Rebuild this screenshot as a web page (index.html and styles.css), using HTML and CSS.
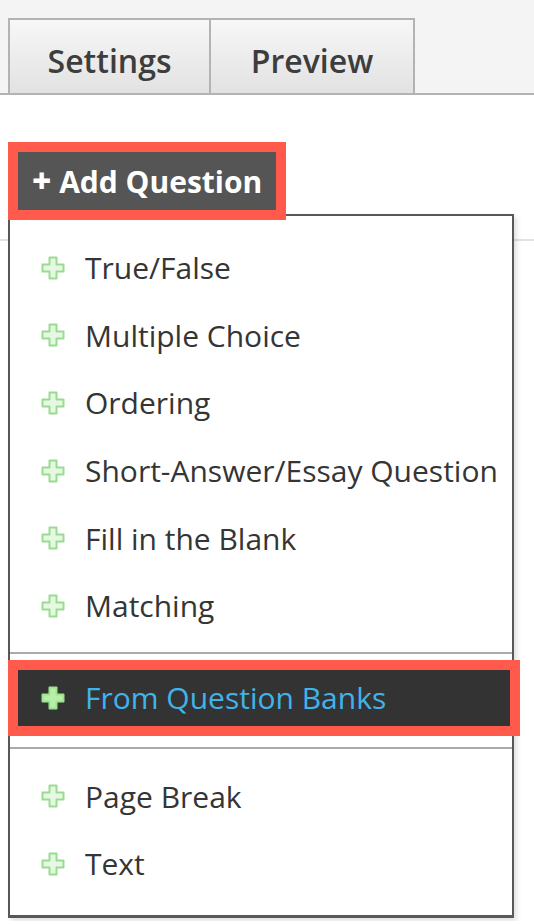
FILE: index.html
```html
<!DOCTYPE html>
<html lang="en">
<head>
<meta charset="utf-8">
<title>Add Question</title>
<link rel="stylesheet" href="styles.css">
</head>
<body>
<div class="tabbar">
  <div class="tab tab-first">Settings</div>
  <div class="tab">Preview</div>
</div>
<div class="workspace">
  <div class="toolbar">
    <div class="add-wrap">
      <button class="add-btn"><span class="plus">+</span> Add Question</button>
      <div class="menu">
        <ul class="section section-types">
          <li class="item"><svg class="ico" viewBox="0 0 24 24"><path class="cross" d="M8.5 1.5h7v7h7v7h-7v7h-7v-7h-7v-7h7z"/></svg><span>True/False</span></li>
          <li class="item"><svg class="ico" viewBox="0 0 24 24"><path class="cross" d="M8.5 1.5h7v7h7v7h-7v7h-7v-7h-7v-7h7z"/></svg><span>Multiple Choice</span></li>
          <li class="item"><svg class="ico" viewBox="0 0 24 24"><path class="cross" d="M8.5 1.5h7v7h7v7h-7v7h-7v-7h-7v-7h7z"/></svg><span>Ordering</span></li>
          <li class="item"><svg class="ico" viewBox="0 0 24 24"><path class="cross" d="M8.5 1.5h7v7h7v7h-7v7h-7v-7h-7v-7h7z"/></svg><span>Short-Answer/Essay Question</span></li>
          <li class="item"><svg class="ico" viewBox="0 0 24 24"><path class="cross" d="M8.5 1.5h7v7h7v7h-7v7h-7v-7h-7v-7h7z"/></svg><span>Fill in the Blank</span></li>
          <li class="item"><svg class="ico" viewBox="0 0 24 24"><path class="cross" d="M8.5 1.5h7v7h7v7h-7v7h-7v-7h-7v-7h7z"/></svg><span>Matching</span></li>
        </ul>
        <ul class="section section-banks">
          <li class="item item-active"><svg class="ico" viewBox="0 0 24 24"><path class="cross cross-solid" d="M8.5 1.5h7v7h7v7h-7v7h-7v-7h-7v-7h7z"/></svg><span>From Question Banks</span><div class="highlight"></div></li>
        </ul>
        <ul class="section section-other">
          <li class="item"><svg class="ico" viewBox="0 0 24 24"><path class="cross" d="M8.5 1.5h7v7h7v7h-7v7h-7v-7h-7v-7h7z"/></svg><span>Page Break</span></li>
          <li class="item"><svg class="ico" viewBox="0 0 24 24"><path class="cross" d="M8.5 1.5h7v7h7v7h-7v7h-7v-7h-7v-7h7z"/></svg><span>Text</span></li>
        </ul>
      </div>
    </div>
  </div>
  <div class="panel"></div>
</div>
</body>
</html>
```

FILE: styles.css
```css
html, body {
  margin: 0;
  padding: 0;
  background: #ffffff;
  font-family: "Open Sans", "Liberation Sans", sans-serif;
  color: #3a3a3a;
}

.tabbar {
  display: flex;
  align-items: flex-end;
  background: #f4f4f4;
  padding: 18px 0 0 8px;
  height: 75px;
  border-bottom: 2px solid #b3b3b3;
}

.tab {
  box-sizing: border-box;
  height: 75px;
  width: 204px;
  padding-top: 21px;
  text-align: center;
  font-size: 32px;
  line-height: 40px;
  font-weight: 600;
  color: #3d3d3d;
  background: linear-gradient(#f7f7f7, #e2e2e2);
  border: 2px solid #b3b3b3;
  border-bottom: 0;
  border-left: 0;
}

.tab-first {
  width: 203px;
  border-left: 2px solid #b3b3b3;
}

.toolbar {
  padding: 57px 0 0 18px;
}

.add-wrap {
  position: relative;
  width: 258px;
}

.add-btn {
  position: relative;
  z-index: 2;
  display: block;
  box-sizing: border-box;
  width: 258px;
  height: 58px;
  margin: 0;
  padding: 0 0 2px 14px;
  border: 0;
  background: #555555;
  color: #ffffff;
  font-family: "Open Sans", "Liberation Sans", sans-serif;
  font-size: 30px;
  font-weight: 700;
  text-align: left;
  white-space: nowrap;
  outline: 10px solid #ff5a4b;
}

.plus {
  font-size: 33px;
  font-weight: 800;
}

.menu {
  position: absolute;
  z-index: 1;
  top: 62px;
  left: -10px;
  box-sizing: border-box;
  width: 506px;
  background: #ffffff;
  border: 2px solid #585858;
  border-bottom-width: 3px;
  box-shadow: 3px 3px 5px rgba(0, 0, 0, 0.12);
}

.section {
  list-style: none;
  margin: 0;
  padding: 0;
}

.section-types {
  padding: 18px 0 12px;
  border-bottom: 2px solid #aaaaaa;
}

.section-banks {
  padding: 6px 0 11px;
  border-bottom: 2px solid #aaaaaa;
}

.section-other {
  padding: 14px 0 17px;
}

.item {
  display: flex;
  align-items: center;
  height: 67.6px;
  padding-left: 31px;
  font-size: 30px;
  color: #353535;
  white-space: nowrap;
}

.section-other .item {
  height: 67.5px;
}

.ico {
  flex: none;
  width: 24px;
  height: 24px;
  margin-right: 20px;
}

.cross {
  fill: #e6f8e2;
  stroke: #97dc8f;
  stroke-width: 2;
  stroke-linejoin: round;
}

.cross-solid {
  fill: #b6f0a6;
  stroke: #9ee38f;
}

.item-active {
  position: relative;
  height: 76px;
  background: #333333;
  color: #40b4ea;
}

.highlight {
  position: absolute;
  top: 0;
  left: -2px;
  box-sizing: border-box;
  width: 512px;
  height: 76px;
  border: 10px solid #ff5a4b;
}

.panel {
  margin-top: 29px;
  height: 680px;
  border-top: 2px solid #e2e2e2;
}
```
